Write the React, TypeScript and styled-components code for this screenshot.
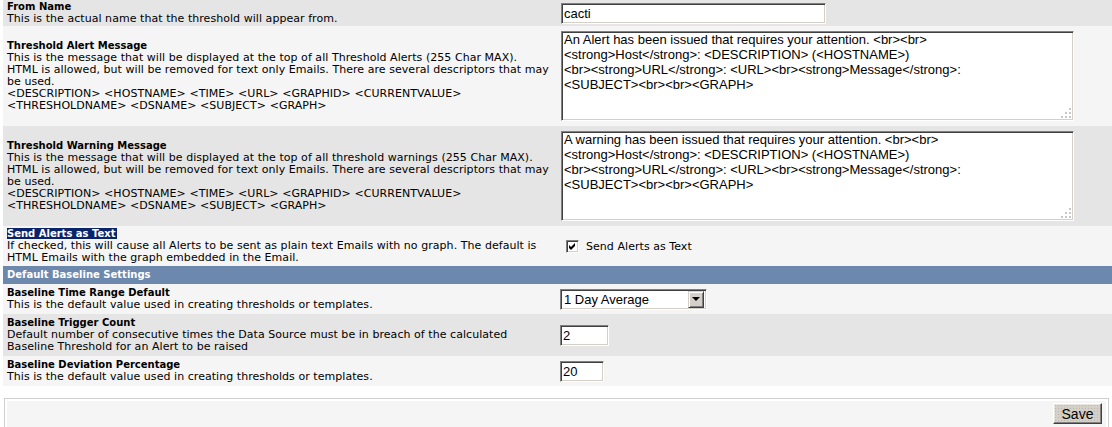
import React from "react";
import styled, { createGlobalStyle } from "styled-components";

const GlobalStyle = createGlobalStyle`
  body {
    margin: 0;
    background: #fff;
  }
`;

const Page = styled.div`
  padding-left: 3px;
  font-family: "DejaVu Sans", Verdana, sans-serif;
  font-size: 11px;
  letter-spacing: 0.05px;
  color: #000;
`;

const Row = styled.div<{ $dark?: boolean; $pad?: number }>`
  display: grid;
  grid-template-columns: 553px 1fr;
  align-items: center;
  background: ${(p) => (p.$dark ? "#e5e5e5" : "#f5f5f5")};
  padding: ${(p) => p.$pad ?? 0}px 0;
`;

const LabelCell = styled.div`
  padding: 1px 4px;
`;

const FieldCell = styled.div`
  padding: 2px 4px;
  display: flex;
  align-items: center;
`;

const Title = styled.div`
  font-size: 10px;
  letter-spacing: 0;
  font-weight: bold;
  line-height: 12px;
  white-space: nowrap;
`;

const Highlight = styled.span`
  background: #0a246a;
  color: #fff;
  padding-right: 1px;
`;

const Desc = styled.div`
  line-height: 12px;
  white-space: nowrap;
`;

const Header = styled.div`
  background: #6d88ad;
  color: #fff;
  font-size: 10px;
  letter-spacing: 0;
  font-weight: bold;
  line-height: 12px;
  padding: 3px 4px;
`;

const sunken = `
  box-sizing: border-box;
  border: 1px solid;
  border-color: #808080 #fff #fff #808080;
  box-shadow: inset 1px 1px 0 #404040, inset -1px -1px 0 #d4d0c8;
  background: #fff;
`;

const TextInput = styled.input<{ $w: number }>`
  ${sunken}
  width: ${(p) => p.$w}px;
  height: 21px;
  margin: 0;
  padding: 0 2px;
  font-family: "Liberation Sans", Arial, sans-serif;
  font-size: 13px;
  letter-spacing: 0;
  color: #000;
  outline: none;
`;

const AreaWrap = styled.div`
  position: relative;
  display: inline-block;
  margin-left: 1px;
`;

const TextArea = styled.textarea`
  ${sunken}
  display: block;
  width: 513px;
  height: 90px;
  margin: 0;
  padding: 0 2px;
  resize: none;
  font-family: "Liberation Sans", Arial, sans-serif;
  font-size: 13px;
  letter-spacing: 0;
  line-height: 15px;
  color: #000;
  outline: none;
  overflow: hidden;
`;

const Grip = styled.svg`
  position: absolute;
  right: 3px;
  bottom: 3px;
`;

const CheckLine = styled.label`
  display: flex;
  align-items: center;
  gap: 7px;
  margin-left: 6px;
  white-space: nowrap;
`;

const CheckBox = styled.span`
  ${sunken}
  display: inline-flex;
  align-items: center;
  justify-content: center;
  width: 13px;
  height: 13px;
`;

const Select = styled.div`
  ${sunken}
  display: flex;
  align-items: center;
  width: 147px;
  height: 21px;
  padding: 2px 2px 2px 3px;
  font-family: "Liberation Sans", Arial, sans-serif;
  font-size: 13px;
  letter-spacing: 0;
`;

const DropButton = styled.span`
  margin-left: auto;
  width: 16px;
  height: 17px;
  box-sizing: border-box;
  display: flex;
  align-items: center;
  justify-content: center;
  background: #d4d0c8;
  border: 1px solid;
  border-color: #d4d0c8 #404040 #404040 #d4d0c8;
  box-shadow: inset 1px 1px 0 #fff, inset -1px -1px 0 #808080;

  &::after {
    content: "";
    border-left: 4px solid transparent;
    border-right: 4px solid transparent;
    border-top: 4px solid #000;
  }
`;

const Panel = styled.div`
  margin: 12px 3px 0 1px;
  border: 1px solid #cfcfcf;
  padding: 2px 2px 0;
`;

const PanelInner = styled.div`
  background: #f5f5f5;
  display: flex;
  justify-content: flex-end;
  padding: 2px 4px 10px;
`;

const Button = styled.button`
  width: 49px;
  height: 21px;
  margin: 0;
  padding: 0;
  font-family: "Liberation Sans", Arial, sans-serif;
  font-size: 14px;
  letter-spacing: 0;
  color: #000;
  background-color: #d4d0c8;
  background-image: radial-gradient(#bcb8b0 0.6px, transparent 0.8px);
  background-size: 3px 3px;
  border: 1px solid;
  border-color: #fff #404040 #404040 #fff;
  box-shadow: inset -1px -1px 0 #808080, inset 1px 1px 0 #e8e6e0;
`;

const descriptors = "<DESCRIPTION> <HOSTNAME> <TIME> <URL> <GRAPHID> <CURRENTVALUE>";
const descriptors2 = "<THRESHOLDNAME> <DSNAME> <SUBJECT> <GRAPH>";

const bodyLines = (first: string) =>
  [
    first,
    "<strong>Host</strong>: <DESCRIPTION> (<HOSTNAME>)",
    "<br><strong>URL</strong>: <URL><br><strong>Message</strong>:",
    "<SUBJECT><br><br><GRAPH>",
  ].join("\n");

const ResizeGrip = () => (
  <Grip width="10" height="10" viewBox="0 0 10 10">
    {[
      [8, 0],
      [4, 4],
      [8, 4],
      [0, 8],
      [4, 8],
      [8, 8],
    ].map(([x, y]) => (
      <rect key={`${x}-${y}`} x={x} y={y} width="2" height="2" fill="#c8c8c8" />
    ))}
  </Grip>
);

const MessageRow = ({
  dark,
  title,
  line1,
  value,
}: {
  dark?: boolean;
  title: string;
  line1: string;
  value: string;
}) => (
  <Row $dark={dark} $pad={3}>
    <LabelCell>
      <Title>{title}</Title>
      <Desc>
        {line1}
        <br />
        HTML is allowed, but will be removed for text only Emails. There are several descriptors that may
        <br />
        be used.
        <br />
        {descriptors}
        <br />
        {descriptors2}
      </Desc>
    </LabelCell>
    <FieldCell>
      <AreaWrap>
        <TextArea defaultValue={value} />
        <ResizeGrip />
      </AreaWrap>
    </FieldCell>
  </Row>
);

export default function App() {
  return (
    <>
      <GlobalStyle />
      <Page>
        <Row $dark>
          <LabelCell>
            <Title>From Name</Title>
            <Desc>This is the actual name that the threshold will appear from.</Desc>
          </LabelCell>
          <FieldCell>
            <TextInput $w={265} defaultValue="cacti" style={{ marginLeft: 1 }} />
          </FieldCell>
        </Row>

        <MessageRow
          title="Threshold Alert Message"
          line1="This is the message that will be displayed at the top of all Threshold Alerts (255 Char MAX)."
          value={bodyLines("An Alert has been issued that requires your attention. <br><br>")}
        />
        <MessageRow
          dark
          title="Threshold Warning Message"
          line1="This is the message that will be displayed at the top of all threshold warnings (255 Char MAX)."
          value={bodyLines("A warning has been issued that requires your attention. <br><br>")}
        />

        <Row $pad={1}>
          <LabelCell>
            <Title>
              <Highlight>Send Alerts as Text</Highlight>
            </Title>
            <Desc>
              If checked, this will cause all Alerts to be sent as plain text Emails with no graph. The default is
              <br />
              HTML Emails with the graph embedded in the Email.
            </Desc>
          </LabelCell>
          <FieldCell>
            <CheckLine>
              <CheckBox>
                <svg width="7" height="7" viewBox="0 0 7 7">
                  <path d="M0 2 L2 4 L6 0 L6 3 L2 7 L0 5 Z" fill="#000" />
                </svg>
              </CheckBox>
              Send Alerts as Text
            </CheckLine>
          </FieldCell>
        </Row>

        <Header>Default Baseline Settings</Header>

        <Row $pad={2}>
          <LabelCell>
            <Title>Baseline Time Range Default</Title>
            <Desc>This is the default value used in creating thresholds or templates.</Desc>
          </LabelCell>
          <FieldCell>
            <Select>
              1 Day Average
              <DropButton />
            </Select>
          </FieldCell>
        </Row>
        <Row $dark $pad={2}>
          <LabelCell>
            <Title>Baseline Trigger Count</Title>
            <Desc>
              Default number of consecutive times the Data Source must be in breach of the calculated
              <br />
              Baseline Threshold for an Alert to be raised
            </Desc>
          </LabelCell>
          <FieldCell>
            <TextInput $w={49} defaultValue="2" />
          </FieldCell>
        </Row>
        <Row $pad={2}>
          <LabelCell>
            <Title>Baseline Deviation Percentage</Title>
            <Desc>This is the default value used in creating thresholds or templates.</Desc>
          </LabelCell>
          <FieldCell>
            <TextInput $w={44} defaultValue="20" />
          </FieldCell>
        </Row>

        <Panel>
          <PanelInner>
            <Button>Save</Button>
          </PanelInner>
        </Panel>
      </Page>
    </>
  );
}
